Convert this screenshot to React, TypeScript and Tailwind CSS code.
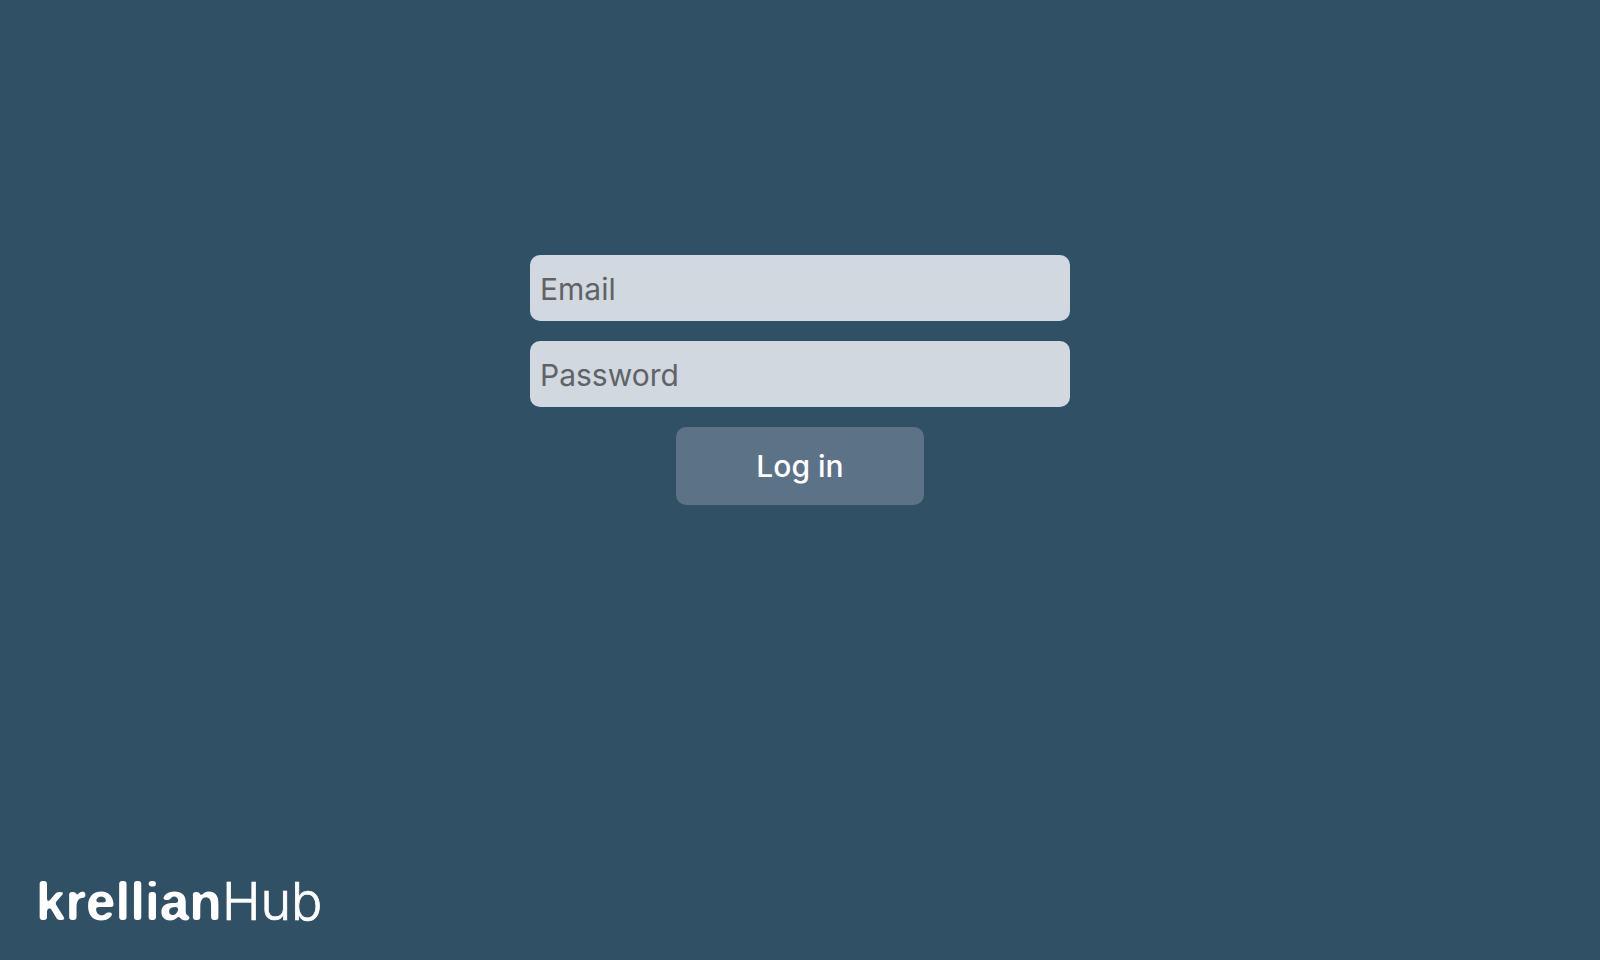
function Logo() {
  return (
    <svg role="img" aria-label="krellianHub" width="300" height="70" viewBox="0 0 300 70" fill="#fff">
      <defs>
        {/* Softens, then sharpens the edge again, which rounds the letter ends */}
        <filter id="rounded">
          <feGaussianBlur stdDeviation="1.6" />
          <feComponentTransfer>
            <feFuncA type="linear" slope="4" intercept="-1.5" />
          </feComponentTransfer>
        </filter>
      </defs>
      <text
        x="6"
        y="52"
        fontSize="53"
        fontWeight="700"
        filter="url(#rounded)"
        className="font-['Liberation_Sans',sans-serif]"
      >
        krellian
      </text>
      <text
        x="192"
        y="52"
        fontSize="52"
        fontWeight="300"
        stroke="#fff"
        strokeWidth="0.7"
        className="font-['Inter',sans-serif]"
      >
        Hub
      </text>
    </svg>
  );
}

export default function App() {
  const field =
    "h-[66px] w-full rounded-[10px] bg-[#d1d8df] px-[10px] pt-0.5 text-[30px] leading-10 text-[#333] outline-none placeholder:text-[#606365]";
  return (
    <main className="flex min-h-screen flex-col bg-[#305066] font-['Inter',sans-serif]">
      <form className="mx-auto mt-[255px] flex w-[540px] max-w-full flex-col items-center gap-5" onSubmit={(e) => e.preventDefault()}>
        <input className={field} type="email" aria-label="Email" placeholder="Email" />
        <input className={field} type="password" aria-label="Password" placeholder="Password" />
        <button className="h-[78px] w-[248px] rounded-[10px] bg-[#5b7287] text-[30px] leading-10 font-medium text-white" type="submit">
          Log in
        </button>
      </form>
      <footer className="mt-auto px-[30px] pb-[22px]">
        <Logo />
      </footer>
    </main>
  );
}
